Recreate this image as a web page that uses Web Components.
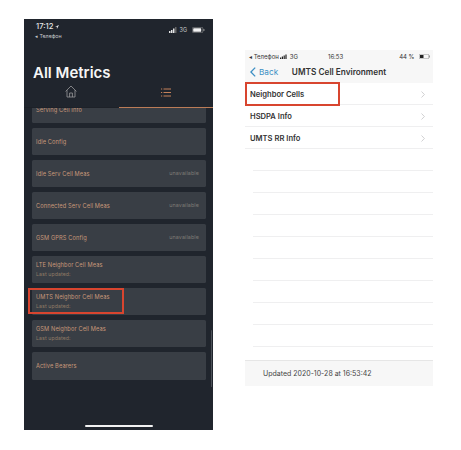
<!DOCTYPE html>
<html lang="ru"><head><meta charset="utf-8"><title>Metrics</title>
<style>
html,body{margin:0;background:#fff}
body{width:461px;height:450px;overflow:hidden;font-family:Inter,"Liberation Sans",sans-serif}
</style></head><body>
<shot-page>
  <dark-phone>
    <metric-card name="Serving Cell Info"></metric-card>
    <metric-card name="Idle Config"></metric-card>
    <metric-card name="Idle Serv Cell Meas" status="unavailable"></metric-card>
    <metric-card name="Connected Serv Cell Meas" status="unavailable"></metric-card>
    <metric-card name="GSM GPRS Config" status="unavailable"></metric-card>
    <metric-card name="LTE Neighbor Cell Meas" sub="Last updated:"></metric-card>
    <metric-card name="UMTS Neighbor Cell Meas" sub="Last updated:" mark></metric-card>
    <metric-card name="GSM Neighbor Cell Meas" sub="Last updated:"></metric-card>
    <metric-card name="Active Bearers"></metric-card>
  </dark-phone>
  <light-phone>
    <env-row mark>Neighbor Cells</env-row>
    <env-row>HSDPA Info</env-row>
    <env-row>UMTS RR Info</env-row>
  </light-phone>
</shot-page>
<script>
const def=(n,html,init)=>customElements.define(n,class extends HTMLElement{
  constructor(){super();this.attachShadow({mode:'open'}).innerHTML=html;}
  connectedCallback(){init&&init(this,this.shadowRoot);}
});
def('shot-page',`<style>:host{display:flex;align-items:flex-start;padding:19px 28px 0 24px;gap:32px;box-sizing:border-box;width:461px;height:450px}</style><slot></slot>`);
def('dark-phone',`<style>
:host{display:flex;flex-direction:column;width:189px;height:411px;background:#20252d;color:#fff;flex:none;position:relative;overflow:hidden}
.status{height:31px;padding:3px 8px 0 12px;box-sizing:border-box;display:flex;justify-content:space-between;font-size:8px;line-height:10px;color:#e4e5e6}
.time{font-size:7.6px;font-weight:500;display:flex;align-items:center;gap:1.5px}.back{font-size:5.3px;line-height:8px;margin-top:0;margin-left:-1px;color:#c9cbce}
.right{display:flex;align-items:center;gap:2px;font-size:5.5px;height:10px;margin-top:3px;color:#c9cbce}
h1{margin:13px 0 0 9px;font-size:15px;line-height:20px;font-weight:600;color:#f6f6f6}
.tabs{display:flex;height:23.5px;flex:none;position:relative}
.tab{flex:1;display:flex;justify-content:center;align-items:flex-start;padding-top:2px}
.line{height:1.5px;flex:none;background:linear-gradient(90deg,#1d2128 50%,#bb7c57 50%,#bb7c57 100%)}
.list{flex:1;overflow:hidden;padding:0 7px 0 8px}
.inner{display:flex;flex-direction:column;gap:5px;margin-top:-12.3px}
.bar{position:absolute;left:61px;bottom:3px;width:68px;height:2px;border-radius:1px;background:#f2f2f2}
.scroll{position:absolute;right:1px;top:311px;width:1.5px;height:57px;background:#4c5158;border-radius:1px}
</style>
<div class="status"><div><div class="time">17:12 <svg width="4" height="4" viewBox="0 0 4 4"><path fill="#e4e5e6" d="M4 0 0 1.8h1.9V4z"/></svg></div><div class="back">◂ Телефон</div></div>
<div class="right"><svg width="8" height="6" viewBox="0 0 8 6"><path fill="#e4e5e6" d="M0 4h1.5v2H0zM2 3h1.5v3H2zM4 1.5h1.5V6H4z"/><path fill="#666" d="M6 0h1.5v6H6z"/></svg><span>3G</span>
<svg width="13" height="6" viewBox="0 0 13 6" style="margin-left:3px"><rect x=".3" y=".3" width="10.6" height="5.4" rx="1.4" fill="none" stroke="#999" stroke-width=".6"/><rect x="1.2" y="1.2" width="8" height="3.6" rx=".6" fill="#f2f2f2"/><rect x="11.4" y="2" width="1" height="2" fill="#999"/></svg></div></div>
<h1>All Metrics</h1>
<div class="tabs"><div class="tab"><svg width="12" height="13" viewBox="0 0 12 13" fill="none" stroke="#9a9b9c" stroke-width=".8"><path d="M.6 6.4 6 1l5.4 5.4M2 5.2V12h8V5.2M4.6 12V8h2.8v4"/></svg></div>
<div class="tab"><svg width="10" height="9" viewBox="0 0 10 9" style="margin-top:2.5px" stroke="#c5825a" stroke-width="1"><path d="M2.5 1H10M2.5 4.5H10M2.5 8H10M0 1h1.2M0 4.5h1.2M0 8h1.2"/></svg></div></div>
<div class="line"></div>
<div class="list"><div class="inner"><slot></slot></div></div>
<div class="bar"></div><div class="scroll"></div>`);
def('metric-card',`<style>
:host{display:flex;align-items:center;justify-content:space-between;height:27.1px;flex:none;box-sizing:border-box;padding:0 7px 0 4px;background:#393e45;border-radius:1.5px;position:relative;font-size:5.7px;line-height:9.5px;color:#c8987a;letter-spacing:.1px}
.sub{color:#8f7b66;font-size:5.2px;line-height:9.5px}
.st{color:#7d7a75;font-size:5.4px}
.mark{position:absolute;left:-4px;top:0;width:96px;height:26px;box-sizing:border-box;border:2px solid #d8452f}
</style><div><div id="n"></div><div class="sub" id="s"></div></div><div class="st" id="t"></div>`,(h,r)=>{
r.getElementById('n').textContent=h.getAttribute('name');
const s=h.getAttribute('sub');if(s)r.getElementById('s').textContent=s;else r.getElementById('s').remove();
const t=h.getAttribute('status');if(t)r.getElementById('t').textContent=t;
if(h.hasAttribute('mark')){const m=document.createElement('div');m.className='mark';r.appendChild(m);}
});
def('light-phone',`<style>
:host{display:flex;flex-direction:column;width:188px;height:335px;margin-top:31px;background:#fff;color:#222;flex:none}
.head{height:33px;background:#f7f7f7;flex:none;display:flex;flex-direction:column}
.status{height:10px;padding:1px 3px 0 4px;box-sizing:content-box;display:flex;justify-content:space-between;align-items:center;font-size:6px;color:#333}
.status>*{display:flex;align-items:center;gap:1.5px}
.nav{flex:1;display:flex;align-items:center;position:relative;font-size:8.25px;font-weight:600;justify-content:center;color:#333}
.back{position:absolute;left:5px;top:0;bottom:0;display:flex;align-items:center;gap:3px;color:#3d8fc4;font-weight:400;font-size:8.2px}
.rows{display:flex;flex-direction:column;flex:none}
.empty{flex:1;display:flex;flex-direction:column;padding-left:8px}
.empty i{display:block;height:22px;border-bottom:1px solid #efeff0;box-sizing:border-box;flex:none}
.foot{height:26px;flex:none;background:#f7f7f7;border-top:1px solid #e6e6e6;box-sizing:border-box;padding-left:18px;display:flex;align-items:center;font-size:7px;color:#444}
</style>
<div class="head"><div class="status"><span>◂ Телефон <svg width="8" height="5" viewBox="0 0 8 5"><path fill="#222" d="M0 3.5h1.2V5H0zM1.8 2.5H3V5H1.8zM3.6 1.5h1.2V5H3.6zM5.4.5h1.2V5H5.4z"/></svg> 3G</span><span style="margin-right:26px">16:53</span><span>44 % <svg width="11" height="5" viewBox="0 0 11 5" style="margin-left:3px"><rect x=".25" y=".25" width="9.5" height="4.5" rx="1" fill="none" stroke="#777" stroke-width=".5"/><rect x="1" y="1" width="3.5" height="3" fill="#222"/><rect x="10" y="1.5" width=".7" height="2" fill="#777"/></svg></span></div>
<div class="nav"><div class="back"><svg width="6" height="10" viewBox="0 0 6 10" fill="none" stroke="#3d8fc4" stroke-width="1.3"><path d="M5.2.6.9 5l4.3 4.4"/></svg>Back</div>UMTS Cell Environment</div></div>
<div class="rows"><slot></slot></div>
<div class="empty"><i></i><i></i><i></i><i></i><i></i><i></i><i></i><i></i><i></i><i style="border:0;height:13px"></i></div>
<div class="foot">Updated 2020-10-28 at 16:53:42</div>`);
def('env-row',`<style>
:host{display:flex;align-items:center;justify-content:space-between;height:22px;flex:none;box-sizing:border-box;padding:2px 8px 0 5px;border-bottom:1px solid #efeff0;font-size:7.6px;font-weight:600;color:#333;position:relative}
.mark{position:absolute;left:0;top:-1px;width:95px;height:24px;box-sizing:border-box;border:2px solid #d8452f}
</style><span><slot></slot></span><svg width="4" height="7" viewBox="0 0 4 7" fill="none" stroke="#c4c4c6" stroke-width=".8"><path d="M.5.5 3.4 3.5.5 6.5"/></svg>`,(h,r)=>{
if(h.hasAttribute('mark')){const m=document.createElement('div');m.className='mark';r.appendChild(m);}
});
</script></body></html>
